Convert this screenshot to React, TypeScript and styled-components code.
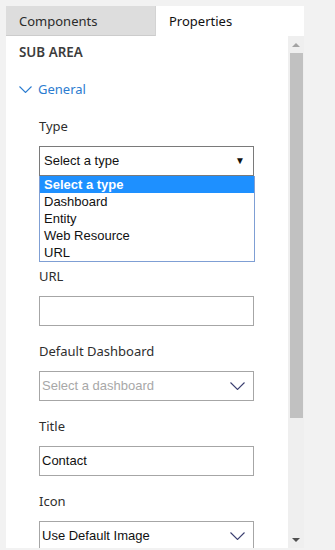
import styled, { createGlobalStyle } from "styled-components";

const GlobalStyle = createGlobalStyle`
  body {
    margin: 0;
    background: #f2f2f2;
  }
`;

const uiFont = `"Segoe UI", "Noto Sans", sans-serif`;
const ctlFont = `"Liberation Sans", Arial, sans-serif`;

const Panel = styled.div`
  margin: 6px 0 0 6px;
  width: 298px;
  height: 542px;
  display: flex;
  flex-direction: column;
  background: #fff;
`;

const TabBar = styled.div`
  display: flex;
  height: 30px;
`;

const Tab = styled.div<{ $active?: boolean }>`
  box-sizing: border-box;
  width: ${(p) => (p.$active ? "148px" : "150px")};
  padding-left: 13px;
  display: flex;
  align-items: center;
  font-family: ${uiFont};
  font-size: 13px;
  color: ${(p) => (p.$active ? "#111" : "#2b2b2b")};
  background: ${(p) => (p.$active ? "#fff" : "#dddddd")};
  border-bottom: ${(p) => (p.$active ? "none" : "1px solid #cccccc")};
  border-right: ${(p) => (p.$active ? "none" : "1px solid #d3d3d3")};
`;

const Body = styled.div`
  flex: 1;
  display: flex;
  min-height: 0;
`;

const Content = styled.div`
  flex: 1;
  overflow: hidden;
  padding: 6px 0 0 13px;
`;

const SectionTitle = styled.div`
  font-family: ${uiFont};
  font-size: 13.4px;
  font-weight: 600;
  color: #3c3c3c;
  line-height: 20px;
`;

const Group = styled.div`
  display: flex;
  align-items: center;
  gap: 6px;
  margin-top: 17px;
  font-family: ${uiFont};
  font-size: 13px;
  color: #2b7cd0;
  line-height: 20px;
`;

const Fields = styled.div`
  padding-left: 20px;
  margin-top: 17px;
  width: 215px;
`;

const Field = styled.div<{ $gap?: number }>`
  margin-top: ${(p) => p.$gap ?? 15}px;
`;

const Label = styled.div`
  font-family: ${uiFont};
  font-size: 13px;
  color: #2e2e2e;
  line-height: 20px;
  margin-bottom: 10px;
`;

const Box = styled.div<{ $dark?: boolean; $muted?: boolean }>`
  box-sizing: border-box;
  height: 30px;
  display: flex;
  align-items: center;
  justify-content: space-between;
  padding: 0 8px 1px ${(p) => (p.$dark ? 4 : 2)}px;
  border: 1px solid ${(p) => (p.$dark ? "#7a7a7a" : "#a6a6a6")};
  background: #fff;
  font-family: ${ctlFont};
  font-size: 13px;
  color: ${(p) => (p.$muted ? "#a8a8a8" : "#111")};
`;

const Arrow = styled.span`
  font-size: 10px;
  color: #111;
  margin-right: 0;
`;

const List = styled.div`
  box-sizing: border-box;
  border: 1px solid #7f9fd4;
  border-top: none;
  width: 216px;
`;

const Option = styled.div<{ $selected?: boolean }>`
  height: 17px;
  line-height: 17px;
  padding-left: 4px;
  font-family: ${ctlFont};
  font-size: 13px;
  font-weight: ${(p) => (p.$selected ? 700 : 400)};
  color: ${(p) => (p.$selected ? "#fff" : "#111")};
  background: ${(p) => (p.$selected ? "#1e90ff" : "#fff")};
`;

const Scrollbar = styled.div`
  width: 16px;
  background: #efefef;
  display: flex;
  flex-direction: column;
  align-items: center;
`;

const ScrollButton = styled.div`
  height: 17px;
  width: 16px;
  display: flex;
  align-items: center;
  justify-content: center;
`;

const Thumb = styled.div`
  width: 13px;
  height: 365px;
  margin-left: 1px;
  background: #c1c1c1;
`;

const Spacer = styled.div`
  flex: 1;
`;

function Chevron({ color, w, h }: { color: string; w: number; h: number }) {
  return (
    <svg width={w} height={h} viewBox={`0 0 ${w} ${h}`}>
      <polyline
        points={`0.5,0.5 ${w / 2},${h - 0.5} ${w - 0.5},0.5`}
        fill="none"
        stroke={color}
        strokeWidth="1.1"
      />
    </svg>
  );
}

function Triangle({ up, color }: { up?: boolean; color: string }) {
  return (
    <svg width="8" height="4" viewBox="0 0 8 4">
      <polygon points={up ? "0,4 8,4 4,0" : "0,0 8,0 4,4"} fill={color} />
    </svg>
  );
}

const types = ["Select a type", "Dashboard", "Entity", "Web Resource", "URL"];

export default function App() {
  return (
    <>
      <GlobalStyle />
      <Panel>
        <TabBar>
          <Tab>Components</Tab>
          <Tab $active>Properties</Tab>
        </TabBar>
        <Body>
          <Content>
            <SectionTitle>SUB AREA</SectionTitle>
            <Group>
              <Chevron color="#2b7cd0" w={13} h={7} />
              General
            </Group>
            <Fields>
              <Field $gap={0}>
                <Label>Type</Label>
                <Box $dark>
                  Select a type
                  <Arrow>▼</Arrow>
                </Box>
                <List>
                  {types.map((t, i) => (
                    <Option key={t} $selected={i === 0}>
                      {t}
                    </Option>
                  ))}
                </List>
              </Field>
              <Field $gap={4}>
                <Label>URL</Label>
                <Box />
              </Field>
              <Field>
                <Label>Default Dashboard</Label>
                <Box $muted>
                  Select a dashboard
                  <Chevron color="#3b3f70" w={15} h={8} />
                </Box>
              </Field>
              <Field>
                <Label>Title</Label>
                <Box>Contact</Box>
              </Field>
              <Field>
                <Label>Icon</Label>
                <Box>
                  Use Default Image
                  <Chevron color="#3b3f70" w={15} h={8} />
                </Box>
              </Field>
            </Fields>
          </Content>
          <Scrollbar>
            <ScrollButton>
              <Triangle up color="#a3a3a3" />
            </ScrollButton>
            <Thumb />
            <Spacer />
            <ScrollButton>
              <Triangle color="#505050" />
            </ScrollButton>
          </Scrollbar>
        </Body>
      </Panel>
    </>
  );
}
